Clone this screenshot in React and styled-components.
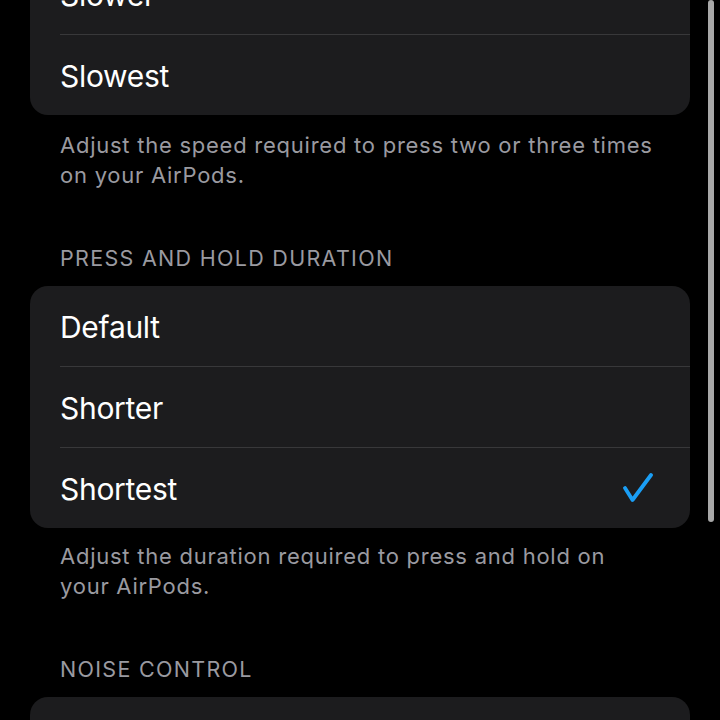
import React from "react";
import styled, { createGlobalStyle } from "styled-components";

const Global = createGlobalStyle`
  html, body { margin: 0; padding: 0; background: #000; }
  body { font-family: Inter, "Noto Sans", "Liberation Sans", sans-serif; overflow: hidden; }
  * { box-sizing: border-box; }
`;

const Page = styled.div`
  width: 720px;
  height: 720px;
  overflow: hidden;
  position: relative;
  background: #000;
`;

const Content = styled.div`
  display: flex;
  flex-direction: column;
  padding: 0 30px;
  margin-top: -46px;
`;

const Card = styled.div`
  background: #1c1c1e;
  border-radius: 18px;
  display: flex;
  flex-direction: column;
  overflow: hidden;
  min-height: ${(p) => p.$minHeight || 0}px;
`;

const Row = styled.div`
  padding-left: 30px;
  height: ${(p) => (p.$last ? 80 : 81)}px;
  display: flex;
`;

const RowInner = styled.div`
  flex: 1;
  display: flex;
  align-items: center;
  justify-content: space-between;
  padding: 2px 36px 0 0;
  border-bottom: ${(p) => (p.$last ? "none" : "1px solid #38383a")};
  color: #fff;
  font-size: 30px;
  letter-spacing: -0.3px;
`;

const Footer = styled.div`
  color: #9a9aa0;
  font-size: 22px;
  line-height: 30px;
  padding: ${(p) => p.$top}px 30px 0 30px;
  letter-spacing: 0.75px;
`;

const Header = styled.div`
  color: #9a9aa0;
  font-size: 21.5px;
  line-height: 26px;
  padding: 0 30px;
  margin-top: 55px;
  margin-bottom: 15px;
  letter-spacing: 1.3px;
`;

const Scrollbar = styled.div`
  position: absolute;
  right: 6px;
  top: 0;
  width: 6px;
  height: 522px;
  border-radius: 3px;
  background: #a8a8a8;
`;

const Check = () => (
  <svg width="32" height="32" viewBox="0 0 32 32" fill="none">
    <path d="M3 15 L10.5 27 L29 2" stroke="#1a9ef5" strokeWidth="3.8" strokeLinecap="round" strokeLinejoin="round" />
  </svg>
);

const List = ({ items, checked }) => (
  <>
    {items.map((it, i) => {
      const last = i === items.length - 1;
      return (
        <Row key={it} $last={last}>
          <RowInner $last={last}>
            <span>{it}</span>
            {checked === it && <Check />}
          </RowInner>
        </Row>
      );
    })}
  </>
);

export default function App() {
  return (
    <Page>
      <Global />
      <Content>
        <Card>
          <List items={["Slower", "Slowest"]} />
        </Card>
        <Footer $top={15}>
          Adjust the speed required to press two or three times on your AirPods.
        </Footer>
        <Header>PRESS AND HOLD DURATION</Header>
        <Card>
          <List items={["Default", "Shorter", "Shortest"]} checked="Shortest" />
        </Card>
        <Footer $top={13}>
          Adjust the duration required to press and hold on your AirPods.
        </Footer>
        <Header>NOISE CONTROL</Header>
        <Card $minHeight={120} />
      </Content>
      <Scrollbar />
    </Page>
  );
}
